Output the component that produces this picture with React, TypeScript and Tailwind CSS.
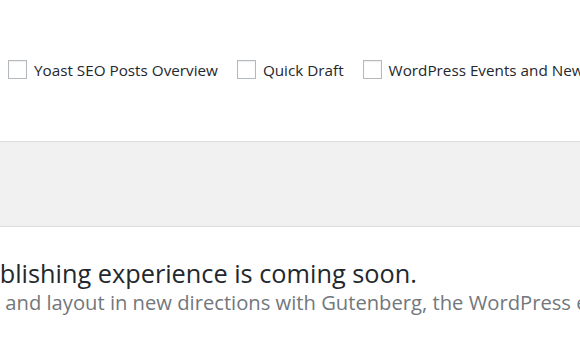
export default function App() {
  const boxes = ["Yoast SEO Posts Overview", "Quick Draft", "WordPress Events and News"];
  return (
    <div className="w-[580px] h-[337px] bg-white overflow-hidden font-['Open_Sans',sans-serif]">
      {/* screen options */}
      <div className="h-[141px] pt-[60px] pl-[8px] flex items-start gap-[19px] whitespace-nowrap text-[15.25px] text-[#23282d]">
        {boxes.map((b) => (
          <label key={b} className="flex items-center gap-[7px] h-[19px]">
            <span className="w-[19px] h-[19px] border border-[#b4b9be] bg-white shadow-[inset_0_1px_2px_rgba(0,0,0,0.07)] shrink-0" />
            <span className="leading-[19px] pt-[2px]">{b}</span>
          </label>
        ))}
      </div>

      {/* grey band */}
      <div className="h-[86px] bg-[#f1f1f1] border-y border-[#dddddd]" />

      {/* welcome panel */}
      <div className="pt-[30px] whitespace-nowrap">
        <h2 className="-ml-[217px] text-[25.3px] leading-[32px] text-[#23282d]">
          A new, modern publishing experience is coming soon.
        </h2>
        <p className="-ml-[230px] text-[20.2px] leading-[26px] text-[#72777c]">
          Take your words, media, and layout in new directions with Gutenberg, the WordPress editor we’re currently building.
        </p>
      </div>
    </div>
  );
}
